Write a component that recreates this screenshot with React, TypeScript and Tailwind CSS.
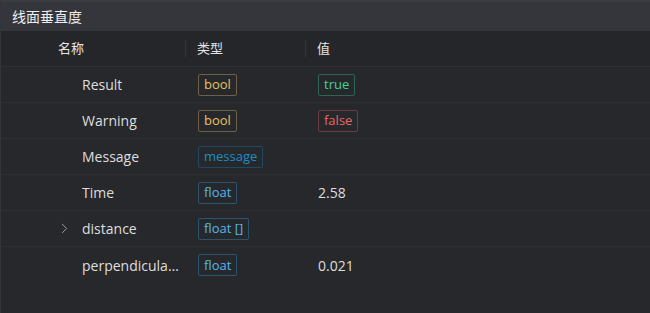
import { ChevronRight } from "lucide-react";

type Tone = "bool" | "true" | "false" | "message" | "float";

interface Row {
  name: string;
  type: string;
  typeTone: Tone;
  value?: string;
  valueTone?: Tone;
  expandable?: boolean;
}

const toneClass: Record<Tone, string> = {
  bool: "text-[#e8c25e] border-[#6e6048]",
  true: "text-[#3ed39a] border-[#2b6654]",
  false: "text-[#e8666a] border-[#6a3d41]",
  message: "text-[#1a8fc2] border-[#1d4a60]",
  float: "text-[#55b6ee] border-[#2b5470]",
};

const rows: Row[] = [
  { name: "Result", type: "bool", typeTone: "bool", value: "true", valueTone: "true" },
  { name: "Warning", type: "bool", typeTone: "bool", value: "false", valueTone: "false" },
  { name: "Message", type: "message", typeTone: "message" },
  { name: "Time", type: "float", typeTone: "float", value: "2.58" },
  { name: "distance", type: "float []", typeTone: "float", expandable: true },
  { name: "perpendicularity", type: "float", typeTone: "float", value: "0.021" },
];

function Tag({ tone, children }: { tone: Tone; children: React.ReactNode }) {
  return (
    <span
      className={`inline-flex h-[22px] items-center rounded-[2px] border px-[5px] text-[13px] leading-none ${toneClass[tone]}`}
    >
      {children}
    </span>
  );
}

export default function App() {
  return (
    <div
      className="flex h-[313px] w-[650px] flex-col overflow-hidden border-l border-[#34353a] bg-[#27282c] text-[#dedede]"
      style={{ fontFamily: '"Open Sans", "Noto Sans CJK SC", sans-serif' }}
    >
      <div className="flex h-[31px] shrink-0 items-center border-t-2 border-[#3b3c41] bg-[#35363b] pl-[11px] text-[14px] text-[#eeeeee]">
        线面垂直度
      </div>

      <div className="grid h-[36px] shrink-0 grid-cols-[184px_120px_1fr] items-center border-b border-[#2f3035] bg-[#25262a] text-[13px] text-[#e4e4e4]">
        <div className="pl-[57px]">名称</div>
        <div className="flex items-center">
          <span className="h-[17px] w-px bg-[#35363b]" />
          <span className="pl-[11px]">类型</span>
        </div>
        <div className="flex items-center">
          <span className="h-[17px] w-px bg-[#35363b]" />
          <span className="pl-[11px]">值</span>
        </div>
      </div>

      {rows.map((row, i) => (
        <div
          key={row.name}
          className={`grid h-[36px] shrink-0 grid-cols-[184px_120px_1fr] items-center text-[14px] ${
            i < rows.length - 1 ? "border-b border-[#2f3035]" : ""
          }`}
        >
          <div className="flex min-w-0 items-center pl-[57px] pr-[4px]">
            <span className="flex w-[24px] shrink-0 items-center">
              {row.expandable && (
                <ChevronRight size={17} strokeWidth={1.4} className="-ml-[2px] text-[#a0a0a0]" />
              )}
            </span>
            <span className="truncate">{row.name}</span>
          </div>
          <div className="pl-[13px]">
            <Tag tone={row.typeTone}>{row.type}</Tag>
          </div>
          <div className="pl-[13px]">
            {row.value &&
              (row.valueTone ? (
                <Tag tone={row.valueTone}>{row.value}</Tag>
              ) : (
                <span>{row.value}</span>
              ))}
          </div>
        </div>
      ))}
    </div>
  );
}
